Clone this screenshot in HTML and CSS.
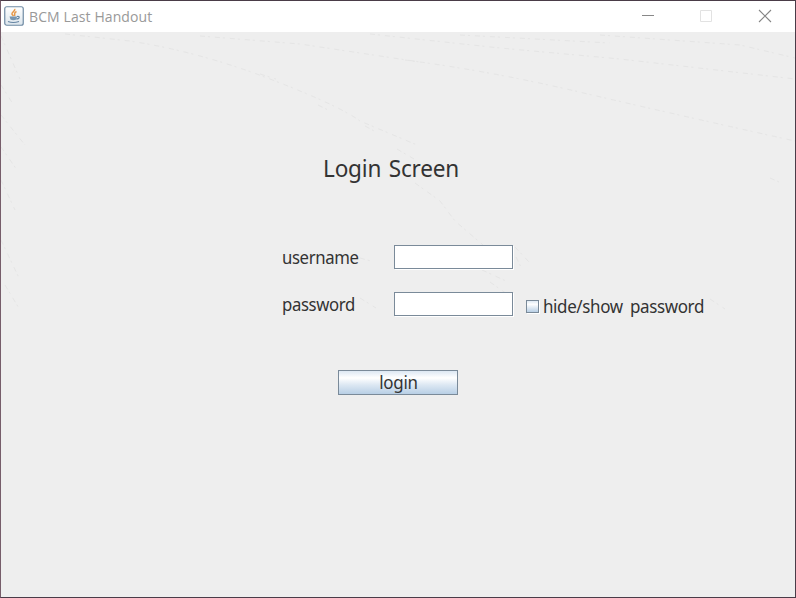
FILE: index.html
```html
<!DOCTYPE html>
<html lang="en">
<head>
<meta charset="utf-8">
<title>BCM Last Handout</title>
<link rel="stylesheet" href="styles.css">
</head>
<body>
<div class="window">
  <header class="titlebar">
    <svg class="app-icon" width="20" height="20" viewBox="0 0 20 20">
      <defs><linearGradient id="tile" x1="0" y1="0" x2="0" y2="1"><stop offset="0" stop-color="#fff"/><stop offset="1" stop-color="#dce5ec"/></linearGradient></defs>
      <rect x=".75" y=".75" width="18.5" height="18.5" rx="2" fill="url(#tile)" stroke="#6f8ba4" stroke-width="1.2"/>
      <path d="M10.5 3C12 5 7 6 8 8.300L9.500 10M12.500 5.500C9 7 11.500 8 10.500 10" fill="none" stroke="#e6984a" stroke-width="1.500"/>
      <path d="M5.500 10.500H13L12.500 13.500Q9 15 6.500 13.500Z" fill="#7896b1"/>
      <path d="M13 10.500Q16 10 15 12Q14 13 12.500 13M4 15.500Q9 17.500 15 15.500" fill="none" stroke="#6585a3" stroke-width="1.200"/>
    </svg>
    <h1 class="title">BCM Last Handout</h1>
    <div class="controls">
      <svg width="12" height="12" viewBox="0 0 12 12"><path d="M0 5.500H12" stroke="#888"/></svg>
      <svg width="12" height="12" viewBox="0 0 12 12"><path d="M.5.500H11.500V11.500H.5Z" fill="none" stroke="#e2e2e2"/></svg>
      <svg width="12" height="12" viewBox="0 0 12 12"><path d="M0 0L12 12M12 0L0 12" stroke="#858585" stroke-width="1.100"/></svg>
    </div>
  </header>
  <main class="content">
    <svg class="texture" width="794" height="565" viewBox="1 32 794 565" fill="none">
      <path d="M65 34L130 41Q200 52 270 79T360 121L417 145M405 60Q490 71 575 91T795 141M260 74L276 79M397 149L414 159M415 183L440 201L455 221L483 245M515 247L529 262M516 257L522 269M482 270L506 281M490 282L507 294M1 36L20 79M1 85L13 104M1 115L25 145M1 147L17 170M1 180L15 210M1 240L20 280M5 285L20 310M770 178L779 182"/>
      <path d="M200 36L300 44L420 62M370 34L500 48L620 59L795 79M460 35L610 43M600 35L740 45L795 58M318 105L330 111M365 126L376 132M710 299L725 309M360 258L371 261M360 298L376 308"/>
    </svg>
    <h2 class="heading">Login Screen</h2>
    <form class="form">
      <label class="label" for="user">username</label>
      <input class="field" id="user" type="text">
      <label class="label" for="pass">password</label>
      <input class="field" id="pass" type="password">
      <label class="toggle"><input class="check" type="checkbox"><span class="toggle-text">hide/show password</span></label>
    </form>
    <button class="login" type="button"><span class="login-text">login</span></button>
  </main>
</div>
</body>
</html>
```
FILE: styles.css
```css
* { box-sizing: border-box; }
body { margin: 0; font-family: "Noto Sans", sans-serif; color: #333; }
.window {
  width: 796px;
  height: 598px;
  border: 1px solid #4a3c48;
  border-left-color: #765d6a;
  background: #eee;
  overflow: hidden;
}
.titlebar {
  display: flex;
  align-items: center;
  height: 31px;
  padding-left: 3px;
  background: #fff;
}
.app-icon { margin-top: -2px; }
.title { margin: 1px 0 0 5px; font: 400 14px/20px "Open Sans", sans-serif; letter-spacing: .1px; color: #999; }
.controls { display: flex; gap: 46px; margin: -1px 24px 0 auto; }
.controls svg:not(:last-child) { margin-left: -1px; margin-right: 1px; }
.controls svg { overflow: visible; }
.content { position: relative; height: 565px; padding-top: 120px; }
.texture { position: absolute; top: 0; left: 0; stroke: #e5e5e5; stroke-width: 1; stroke-dasharray: 5 3 2 5; }
.heading { position: relative; width: max-content; margin: 0 0 0 322px; font-size: 24px; line-height: 32px; font-weight: 400; letter-spacing: -.2px; word-spacing: 2px; transform: scaleX(.94); transform-origin: left; }
.form {
  position: relative;
  display: grid;
  grid-template-columns: 112px 119px auto;
  justify-content: start;
  grid-template-rows: 24px 24px;
  row-gap: 23px;
  margin: 61px 0 0 281px;
}
.label { grid-column: 1; font-size: 18px; line-height: 24px; letter-spacing: -.4px; transform: scaleX(.93); transform-origin: left; }
.field {
  grid-column: 2;
  width: 119px;
  height: 24px;
  padding: 0 4px;
  border: 1px solid #7a8a99;
  border-radius: 0;
  outline: 0;
  background: #fff;
  box-shadow: 1px 1px #fff;
}
.toggle { display: flex; align-items: center; height: 24px; margin: 2px 0 0 13px; font-size: 18px; line-height: 24px; letter-spacing: -.4px; white-space: nowrap; }
.toggle-text { word-spacing: 3.5px; transform: scaleX(.943); transform-origin: left; }
.check {
  appearance: none;
  width: 13px;
  height: 13px;
  margin: 0 4px 0 0;
  border: 1px solid #7a8a99;
  background: linear-gradient(#dfeaf4, #fff 30%, #b8cfe5);
  box-shadow: 1px 1px #fff;
}
.login {
  position: relative;
  display: block;
  width: 120px;
  height: 25px;
  margin: 54px 0 0 337px;
  padding: 0;
  border: 1px solid #7a8a99;
  background: linear-gradient(#dde8f3, #fff 30%, #dde8f3 60%, #b8cfe5);
  color: #333;
  font: 400 18px/23px "Noto Sans", sans-serif;
  letter-spacing: -.3px;
}
.login-text { display: inline-block; transform: scaleX(.94); }
```
